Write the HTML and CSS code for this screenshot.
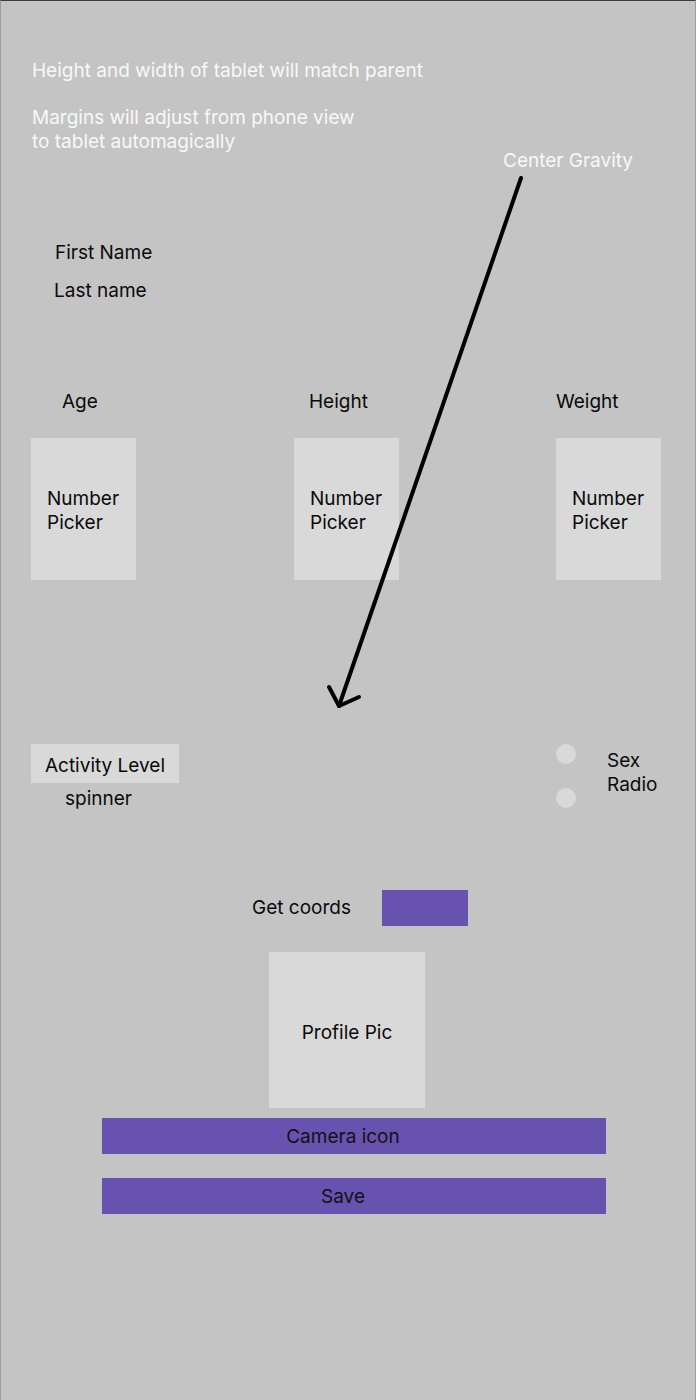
FILE: index.html
```html
<!DOCTYPE html>
<html lang="en">
<head>
<meta charset="utf-8">
<title>Profile layout</title>
<link rel="stylesheet" href="styles.css">
</head>
<body>
<div class="frame">
  <div class="notes">
    <p class="note">Height and width of tablet will match parent</p>
    <p class="note note-second">Margins will adjust from phone view<br>to tablet automagically</p>
  </div>

  <div class="names">
    <div class="label first-name">First Name</div>
    <div class="label last-name">Last name</div>
  </div>

  <div class="pickers">
    <div class="picker">
      <div class="label picker-label age">Age</div>
      <div class="box picker-box">Number<br>Picker</div>
    </div>
    <div class="picker">
      <div class="label picker-label height">Height</div>
      <div class="box picker-box">Number<br>Picker</div>
    </div>
    <div class="picker">
      <div class="label picker-label weight">Weight</div>
      <div class="box picker-box">Number<br>Picker</div>
    </div>
  </div>

  <div class="activity-row">
    <div class="activity">
      <div class="box activity-box">Activity Level</div>
      <div class="label spinner">spinner</div>
    </div>
    <div class="sex">
      <div class="radios">
        <span class="radio"></span>
        <span class="radio"></span>
      </div>
      <div class="label sex-label">Sex<br>Radio</div>
    </div>
  </div>

  <div class="coords-row">
    <span class="label coords-label">Get coords</span>
    <span class="coords-btn"></span>
  </div>

  <div class="box profile-pic">Profile Pic</div>

  <div class="btn camera-btn">Camera icon</div>
  <div class="btn save-btn">Save</div>

  <div class="annotation">Center Gravity</div>
  <svg class="arrow" width="696" height="1400" viewBox="0 0 696 1400" aria-hidden="true">
    <path d="M521 178 L339 706" fill="none" stroke="#000" stroke-width="4" stroke-linecap="round"/>
    <path d="M329 687 L339 706 L359 697" fill="none" stroke="#000" stroke-width="4" stroke-linecap="round" stroke-linejoin="round"/>
  </svg>
</div>
</body>
</html>
```

FILE: styles.css
```css
* {
  box-sizing: border-box;
}

html, body {
  margin: 0;
  padding: 0;
}

body {
  width: 696px;
  height: 1400px;
  background: #c4c4c4;
  font-family: Inter, "Noto Sans", "Liberation Sans", sans-serif;
  font-size: 19px;
  line-height: 24px;
  color: #000;
}

.frame {
  position: relative;
  width: 696px;
  height: 1400px;
  background: #c4c4c4;
  border-top: 1px solid #3c3c3c;
  border-left: 1px solid #9c9c9c;
  border-right: 1px solid #9c9c9c;
}

.notes {
  padding: 58px 0 0 31px;
}

.note {
  margin: 0;
  color: #f8f8f8;
}

.note-second {
  margin-top: 23px;
}

.label {
  color: #0a0a0a;
}

.names {
  margin-top: 87px;
}

.first-name {
  margin-left: 54px;
}

.last-name {
  margin-left: 53px;
  margin-top: 14px;
}

.pickers {
  margin-top: 87px;
  padding-left: 30px;
  display: grid;
  grid-template-columns: 263px 262px 105px;
}

.picker-label {
  margin-bottom: 24px;
}

.age {
  margin-left: 31px;
}

.height {
  margin-left: 15px;
}

.weight {
  margin-left: 0;
}

.box {
  background: #d9d9d9;
  color: #0a0a0a;
}

.picker-box {
  width: 105px;
  height: 142px;
  padding-left: 16px;
  padding-top: 4px;
  display: flex;
  align-items: center;
}

.activity-row {
  margin-top: 164px;
  padding-left: 30px;
  display: flex;
  align-items: flex-start;
}

.activity {
  width: 525px;
}

.activity-box {
  width: 148px;
  height: 39px;
  padding-top: 5px;
  display: flex;
  align-items: center;
  justify-content: center;
}

.spinner {
  margin-top: 4px;
  margin-left: 34px;
}

.sex {
  display: flex;
  align-items: flex-start;
}

.radios {
  display: flex;
  flex-direction: column;
  gap: 24px;
}

.radio {
  display: block;
  width: 20px;
  height: 20px;
  border-radius: 50%;
  background: #d9d9d9;
}

.sex-label {
  margin-left: 31px;
  margin-top: 5px;
}

.coords-row {
  margin-top: 79px;
  padding-left: 251px;
  display: flex;
  align-items: center;
  height: 36px;
}

.coords-label {
  width: 130px;
}

.coords-btn {
  display: block;
  width: 86px;
  height: 36px;
  background: #6752b0;
}

.profile-pic {
  margin-top: 26px;
  margin-left: 268px;
  width: 156px;
  height: 156px;
  padding-top: 5px;
  display: flex;
  align-items: center;
  justify-content: center;
}

.btn {
  margin-left: 101px;
  width: 504px;
  height: 36px;
  padding-right: 22px;
  padding-top: 2px;
  background: #6752b0;
  color: #111;
  display: flex;
  align-items: center;
  justify-content: center;
}

.camera-btn {
  margin-top: 10px;
}

.save-btn {
  margin-top: 24px;
}

.annotation {
  position: absolute;
  left: 502px;
  top: 148px;
  color: #f8f8f8;
}

.arrow {
  position: absolute;
  left: -1px;
  top: -1px;
  pointer-events: none;
}
```
